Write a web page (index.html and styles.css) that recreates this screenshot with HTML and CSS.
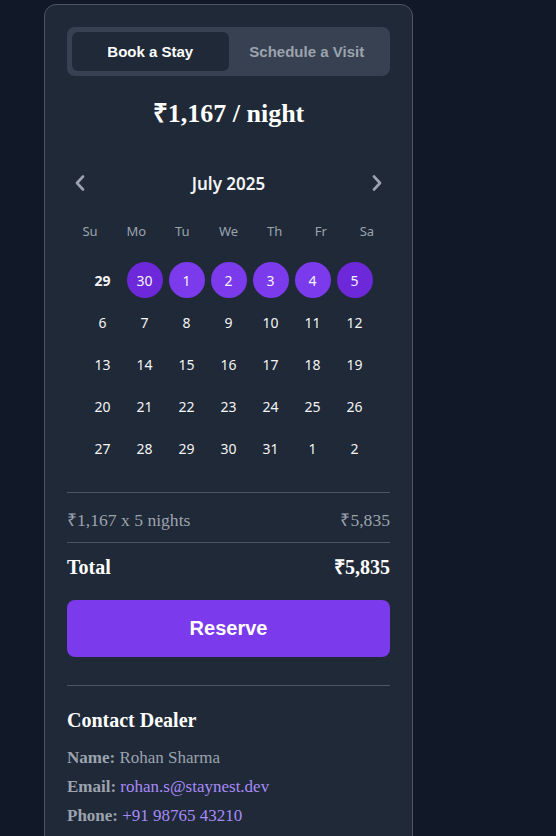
FILE: index.html
```html
<!DOCTYPE html>
<html>
<head>
<meta charset="utf-8">
<link rel="stylesheet" href="styles.css">
</head>
<body>
<div class="card">
  <div class="tabs">
    <div class="tab active">Book a Stay</div>
    <div class="tab">Schedule a Visit</div>
  </div>
  <h2 class="price">₹1,167 / night</h2>

  <div class="cal-head">
    <svg class="chev" width="12" height="16" viewBox="0 0 12 16"><path d="M9 1.5 L3 8 L9 14.5" fill="none" stroke="#9ca3af" stroke-width="2.6" stroke-linecap="round" stroke-linejoin="round"/></svg>
    <div class="month">July 2025</div>
    <svg class="chev" width="12" height="16" viewBox="0 0 12 16"><path d="M3 1.5 L9 8 L3 14.5" fill="none" stroke="#9ca3af" stroke-width="2.6" stroke-linecap="round" stroke-linejoin="round"/></svg>
  </div>

  <div class="dow">
    <span>Su</span><span>Mo</span><span>Tu</span><span>We</span><span>Th</span><span>Fr</span><span>Sa</span>
  </div>

  <div class="dates">
    <span class="d today">29</span>
    <span class="d edge">30</span>
    <span class="d mid">1</span>
    <span class="d mid">2</span>
    <span class="d mid">3</span>
    <span class="d mid">4</span>
    <span class="d edge">5</span>
    <span class="d">6</span><span class="d">7</span><span class="d">8</span><span class="d">9</span><span class="d">10</span><span class="d">11</span><span class="d">12</span>
    <span class="d">13</span><span class="d">14</span><span class="d">15</span><span class="d">16</span><span class="d">17</span><span class="d">18</span><span class="d">19</span>
    <span class="d">20</span><span class="d">21</span><span class="d">22</span><span class="d">23</span><span class="d">24</span><span class="d">25</span><span class="d">26</span>
    <span class="d">27</span><span class="d">28</span><span class="d">29</span><span class="d">30</span><span class="d">31</span><span class="d">1</span><span class="d">2</span>
  </div>

  <div class="summary">
    <div class="row line">
      <span>₹1,167 x 5 nights</span>
      <span>₹5,835</span>
    </div>
    <div class="row total">
      <span>Total</span>
      <span>₹5,835</span>
    </div>
  </div>

  <button class="reserve">Reserve</button>

  <div class="contact">
    <h3>Contact Dealer</h3>
    <p><b>Name:</b> Rohan Sharma</p>
    <p><b>Email:</b> <a href="#">rohan.s@staynest.dev</a></p>
    <p><b>Phone:</b> <a href="#">+91 98765 43210</a></p>
  </div>
</div>
</body>
</html>
```

FILE: styles.css
```css
html, body {
  margin: 0;
  padding: 0;
  background: #111827;
  height: 100%;
  overflow: hidden;
}
body {
  font-family: "Liberation Serif", "Times New Roman", serif;
  color: #ffffff;
}
.card {
  margin: 4px 0 0 44px;
  box-sizing: content-box;
  border: 1px solid #4b5563;
  border-radius: 12px;
  background: #1f2937;
  padding: 22px 22px 40px 22px;
  width: 323px;
}
.tabs {
  display: flex;
  background: #374151;
  border-radius: 8px;
  padding: 5px;
}
.tab {
  flex: 1;
  text-align: center;
  font-family: "Liberation Sans", Arial, sans-serif;
  font-weight: bold;
  font-size: 15px;
  line-height: 17px;
  padding: 11px 0;
  color: #9ca3af;
  border-radius: 6px;
}
.tab.active {
  background: #1f2937;
  color: #ffffff;
}
.price {
  margin: 23px 0 0;
  text-align: center;
  font-size: 26px;
  line-height: 30px;
  font-weight: bold;
}
.cal-head {
  display: flex;
  align-items: center;
  justify-content: space-between;
  padding: 0 7px;
  margin-top: 39px;
  height: 30px;
}
.month {
  font-family: "Noto Sans", "Open Sans", sans-serif;
  font-weight: 600;
  font-size: 17px;
  color: #f3f4f6;
}
.dow {
  display: grid;
  grid-template-columns: repeat(7, 1fr);
  margin-top: 23px;
  font-family: "Noto Sans", "Open Sans", sans-serif;
  font-size: 13px;
  line-height: 20px;
  color: #9ca3af;
  text-align: center;
}
.dates {
  display: grid;
  grid-template-columns: repeat(7, 36px);
  grid-auto-rows: 36px;
  gap: 6px;
  justify-content: center;
  margin-top: 21px;
  font-family: "Noto Sans", "Open Sans", sans-serif;
  font-size: 14px;
  color: #f3f4f6;
}
.d {
  display: flex;
  align-items: center;
  justify-content: center;
  border-radius: 50%;
}
.d.today {
  font-weight: bold;
}
.d.edge {
  background: #6d28d9;
}
.d.mid {
  background: #7c3aed;
}
.summary {
  margin-top: 26px;
  border-top: 1px solid #4b5563;
}
.row {
  display: flex;
  justify-content: space-between;
  align-items: baseline;
}
.row.line {
  font-size: 17.6px;
  color: #9ca3af;
  padding: 14px 0 11px;
  border-bottom: 1px solid #4b5563;
}
.row.total {
  font-size: 20px;
  font-weight: bold;
  padding: 10px 0 0;
}
.reserve {
  display: block;
  width: 100%;
  margin-top: 20px;
  height: 57px;
  border: none;
  border-radius: 8px;
  background: #7c3aed;
  color: #ffffff;
  font-family: "Liberation Sans", Arial, sans-serif;
  font-weight: bold;
  font-size: 20px;
}
.contact {
  margin-top: 28px;
  border-top: 1px solid #4b5563;
  padding-top: 22px;
}
.contact h3 {
  margin: 0 0 11px;
  font-size: 20px;
  line-height: 24px;
}
.contact p {
  margin: 0;
  font-size: 17px;
  line-height: 29px;
  color: #9ca3af;
}
.contact a {
  color: #a78bfa;
  text-decoration: none;
}
```
